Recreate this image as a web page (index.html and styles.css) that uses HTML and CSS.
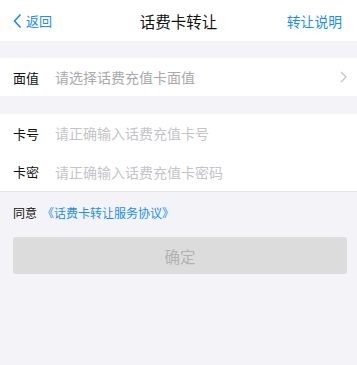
FILE: index.html
```html
<!DOCTYPE html>
<html lang="zh">
<head>
<meta charset="utf-8">
<link rel="stylesheet" href="styles.css">
</head>
<body>
<div class="page">
  <header class="nav">
    <div class="back">
      <svg class="back-icon" width="9" height="16" viewBox="0 0 9 16"><path d="M7.5 1.5 L1.5 8 L7.5 14.5" fill="none" stroke="#1a8ef5" stroke-width="1.6"/></svg>
      <span>返回</span>
    </div>
    <div class="title">话费卡转让</div>
    <div class="help">转让说明</div>
  </header>
  <section class="group g1">
    <div class="row">
      <span class="label">面值</span>
      <span class="ph">请选择话费充值卡面值</span>
      <svg class="arrow" width="7" height="12" viewBox="0 0 7 12"><path d="M1 1 L6 6 L1 11" fill="none" stroke="#c4c4c8" stroke-width="1.3"/></svg>
    </div>
  </section>
  <section class="group g2">
    <div class="row">
      <span class="label">卡号</span>
      <span class="ph light">请正确输入话费充值卡号</span>
    </div>
    <div class="row">
      <span class="label">卡密</span>
      <span class="ph light">请正确输入话费充值卡密码</span>
    </div>
  </section>
  <div class="agree">同意<span class="link">《话费卡转让服务协议》</span></div>
  <div class="btn-wrap"><div class="btn">确定</div></div>
</div>
</body>
</html>
```
FILE: styles.css
```css
html, body { margin: 0; padding: 0; }
body {
  background: #f4f4f8;
  font-family: "Noto Sans CJK SC", "Noto Sans", sans-serif;
  width: 357px;
  height: 365px;
  overflow: hidden;
}
.nav {
  height: 41px;
  background: #fff;
  display: flex;
  align-items: center;
  justify-content: space-between;
  padding: 0 15px 0 13px;
  position: relative;
}
.back {
  display: flex;
  align-items: center;
  gap: 4px;
  color: #1a8ef5;
  font-size: 13px;
}
.title {
  position: absolute;
  left: 0; right: 0;
  text-align: center;
  font-size: 15.5px;
  color: #111;
  pointer-events: none;
}
.help { color: #1a8ef5; font-size: 13.8px; }
.group { background: #fff; }
.g1 { margin-top: 17px; }
.g2 { margin-top: 18px; border-bottom: 1px solid #e4e4e6; }
.row {
  height: 38px;
  display: flex;
  align-items: center;
  padding: 0 10px 0 13px;
}
.g2 .row { height: 38.5px; }
.label { font-size: 13px; color: #111; width: 42px; }
.ph { font-size: 14px; color: #a9a9ad; flex: 1; }
.ph.light { color: #c4c4c8; }
.agree {
  padding: 12px 13px 0;
  font-size: 12px;
  color: #111;
  height: 34px;
  box-sizing: border-box;
}
.link { color: #1a8ef5; margin-left: 5px; }
.btn-wrap { padding: 11px 10px 0 13px; }
.btn {
  height: 37px;
  background: #dcdcdc;
  border-radius: 3px;
  display: flex;
  align-items: center;
  justify-content: center;
  color: #b2b2b2;
  font-size: 15.5px;
}
```
